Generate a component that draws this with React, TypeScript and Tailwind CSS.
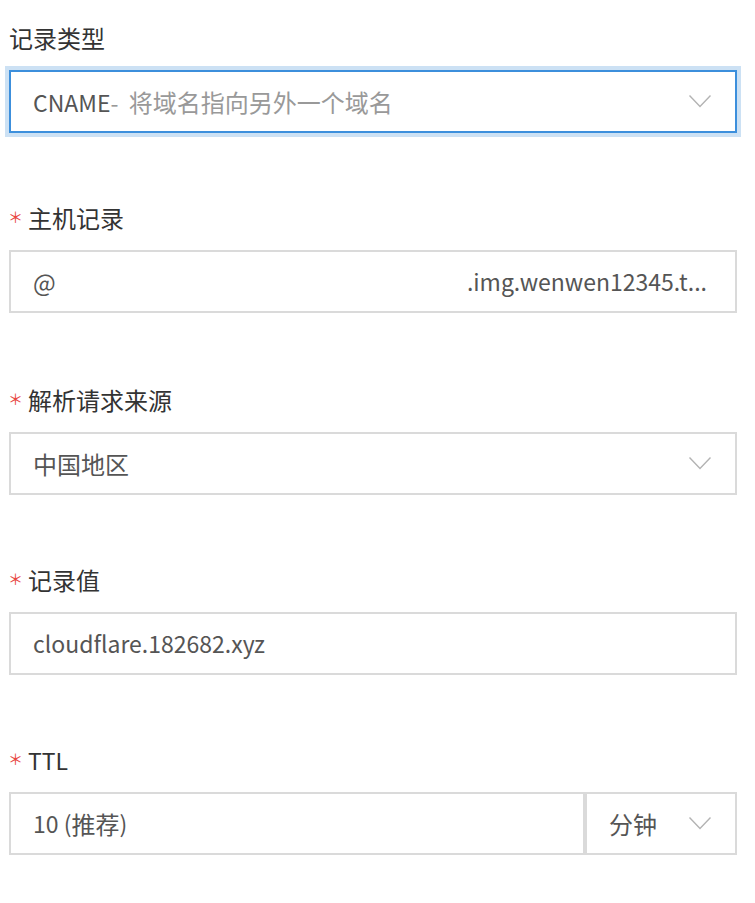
import { ReactNode } from 'react'

const font = { fontFamily: '"Noto Sans CJK SC", "Noto Sans", sans-serif' }

function Chevron() {
  return (
    <svg width="24" height="15" viewBox="0 0 24 15" fill="none" className="shrink-0">
      <path d="M1.5 1.5 L12 12.5 L22.5 1.5" stroke="#b3b3b3" strokeWidth="1.4" />
    </svg>
  )
}

function Label({ text, required }: { text: string; required?: boolean }) {
  return (
    <div className="h-[32px] flex items-center text-[24px] text-[#333]">
      {required && <span className="text-[#e8473f] text-[15px] w-[20px] -ml-[1px] -mt-[3px] leading-none">＊</span>}
      <span className={text === 'TTL' ? 'text-[23px]' : ''}>{text}</span>
    </div>
  )
}

function Field({ label, required, last, children }: { label: string; required?: boolean; last?: string; children: ReactNode }) {
  return (
    <div className={last ?? 'mb-[69px]'}>
      <Label text={label} required={required} />
      <div className="mt-[16px]">{children}</div>
    </div>
  )
}

export default function App() {
  return (
    <div className="min-h-screen bg-white pt-[22px] pl-[9px] pr-[18px]" style={font}>
      <Field label="记录类型">
        <div className="h-[63px] border-2 border-[#3c8fdc] shadow-[0_0_0_4px_#cce1f4] flex items-center justify-between pl-[22px] pr-[23px] text-[23px]">
          <span>
            <span className="text-[#555]">CNAME</span>
            <span className="text-[#999]">- <span className="text-[24px] ml-[5px]">将域名指向另外一个域名</span></span>
          </span>
          <Chevron />
        </div>
      </Field>

      <Field label="主机记录" required last="mb-[71px]">
        <div className="h-[63px] border-2 border-[#dadada] flex items-center justify-between pl-[22px] pr-[28px] text-[23px] text-[#555]">
          <span className="text-[24px]">@</span>
          <span>.img.wenwen12345.t...</span>
        </div>
      </Field>

      <Field label="解析请求来源" required>
        <div className="h-[63px] border-2 border-[#dadada] flex items-center justify-between pl-[22px] pr-[23px] text-[24px] text-[#555]">
          <span>中国地区</span>
          <Chevron />
        </div>
      </Field>

      <Field label="记录值" required>
        <div className="h-[63px] border-2 border-[#dadada] flex items-center pl-[22px] text-[23px] text-[#555]">
          cloudflare.182682.xyz
        </div>
      </Field>

      <Field label="TTL" required>
        <div className="flex h-[63px] text-[23px] text-[#555]">
          <div className="flex-1 border-2 border-[#dadada] flex items-center pl-[22px]">
            10 (<span className="text-[24px]">推荐</span>)
          </div>
          <div className="w-[152px] border-2 border-[#dadada] flex items-center justify-between pl-[22px] pr-[23px]">
            <span className="text-[24px]">分钟</span>
            <Chevron />
          </div>
        </div>
      </Field>
    </div>
  )
}
